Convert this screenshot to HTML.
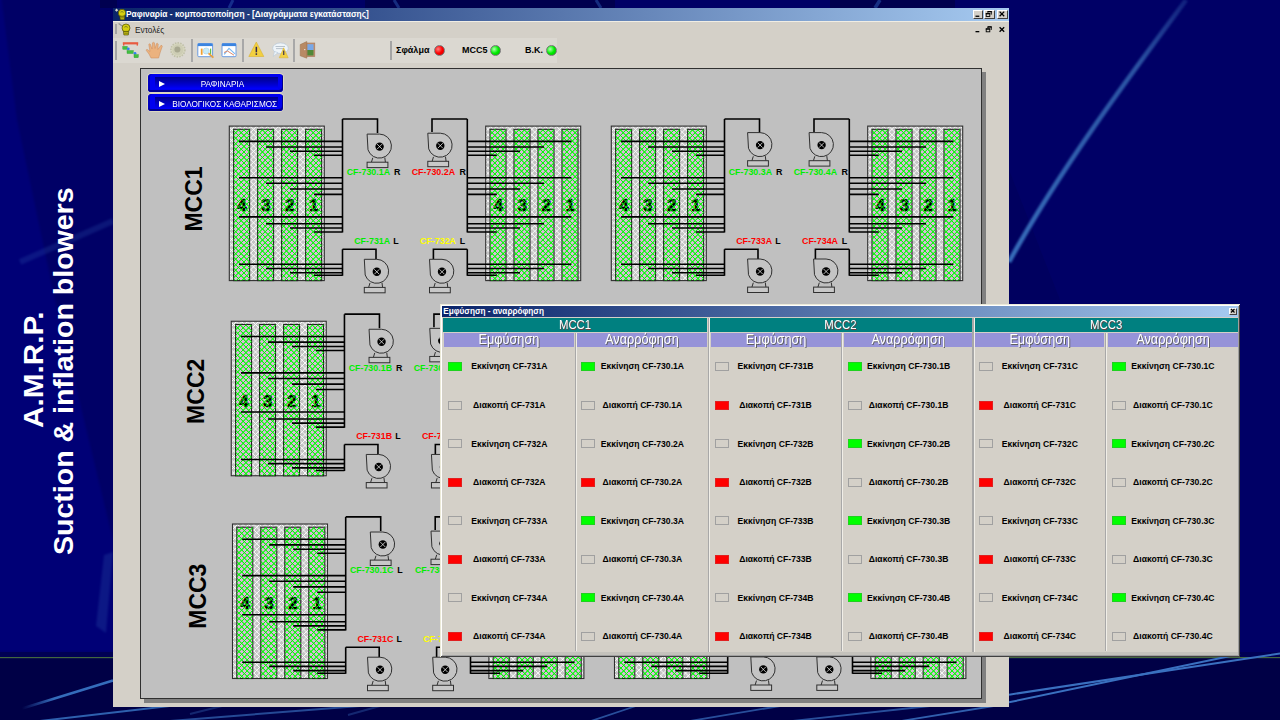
<!DOCTYPE html>
<html><head><meta charset="utf-8">
<style>
*{margin:0;padding:0;box-sizing:border-box}
html,body{width:1280px;height:720px;overflow:hidden;background:#000066;font-family:"Liberation Sans",sans-serif}
.a{position:absolute}
#bg{position:absolute;left:0;top:0}
.st{position:absolute;color:#fff;font-weight:bold;font-size:27.5px;line-height:30px;white-space:nowrap;transform-origin:0 0;transform:rotate(-90deg) scaleX(1.08)}
#win{position:absolute;left:113px;top:8px;width:896px;height:699px;background:#d4d0c8}
#title{position:absolute;left:0;top:0;width:896px;height:13px;background:linear-gradient(to right,#0a246a,#a6caf0)}
#title .t{position:absolute;left:13px;top:0px;color:#fff;font-weight:bold;font-size:8.4px;line-height:13px;white-space:nowrap}
.tb{position:absolute;top:1.5px;width:10.5px;height:9.5px;background:#d4d0c8;border-top:1px solid #fff;border-left:1px solid #fff;border-right:1px solid #404040;border-bottom:1px solid #404040}
.grip{position:absolute;width:2.4px;background:#a4a4a4}
.sep{position:absolute;width:2px;background:#a8a8a8}
.lbl{position:absolute;font-size:9px;font-weight:bold;color:#000;white-space:nowrap;line-height:10px}
.led{position:absolute;width:11px;height:11px;border-radius:50%;border:1px solid #777}
#panel{position:absolute;left:27px;top:60px;width:842px;height:631px;background:#c0c0c0;border:1px solid #303030;box-shadow:4px 4px 0 #808080}
.btn{position:absolute;left:35.4px;width:134.6px;height:17.6px;border-radius:3.5px;background:#0000f0;box-shadow:0 0 0 1px #dcd8c0, inset -1px -2px 0 #000090, inset 2px 0 0 #0000c0}
.btn .in{position:absolute;left:6.6px;top:3.2px;width:122.7px;height:11.9px;background:linear-gradient(#000088,#0000d8 70%,#0000ff)}
.btn .tri{position:absolute;left:10.6px;top:6.9px;width:0;height:0;border-left:6.5px solid #fff;border-top:3px solid transparent;border-bottom:3px solid transparent}
.btn .tx{position:absolute;left:16.6px;width:115px;top:4.4px;color:#fff;font-size:9.4px;line-height:11px;text-align:center;white-space:nowrap;transform:scaleX(0.875)}
#diag{position:absolute;left:0;top:0}
#diag .pp{fill:none;stroke:#000;stroke-width:1.6}
#diag .dg{font:bold 16.5px "Liberation Sans",sans-serif;text-anchor:middle;fill:#000;stroke:#000;stroke-width:0.7}
#diag .lb{font:bold 8.9px "Liberation Sans",sans-serif}
#diag .mcc{font:bold 23px "Liberation Sans",sans-serif;text-anchor:middle;fill:#000}
#dlg{position:absolute;left:440px;top:304px;width:800px;height:353px;background:#d4d0c8;box-shadow:inset 1px 1px 0 #ecead8,inset -1px -1px 0 #404040,inset 2px 2px 0 #fff,inset -2px -2px 0 #a0a0a0}
#dlg .dt{color:#fff;font-weight:bold;font-size:8.2px;line-height:11.2px;white-space:nowrap}
#dlg .th{color:#fff;font-size:13.2px;line-height:14.5px;text-align:center;text-shadow:1px 1px 0 #6a4040;transform:scaleX(0.86)}
#dlg .sh{color:#fff;font-size:13.8px;line-height:14.6px;text-align:center;text-shadow:1px 1px 0 #606060;transform:scaleX(0.92)}
#dlg .rt{color:#000;font-weight:bold;font-size:8.6px;line-height:11px;text-align:center;white-space:nowrap}
</style></head><body>
<svg id="bg" width="1280" height="720">
 <defs>
  <linearGradient id="lg1" x1="0" y1="0" x2="1" y2="0"><stop offset="0" stop-color="#00007e"/><stop offset="1" stop-color="#000066"/></linearGradient>
  <linearGradient id="fadeL" x1="0" y1="0" x2="1" y2="0"><stop offset="0" stop-color="#3a78c8" stop-opacity="0"/><stop offset="0.35" stop-color="#3a78c8" stop-opacity="0.9"/><stop offset="1" stop-color="#3a78c8" stop-opacity="0.9"/></linearGradient>
 </defs>
 <filter id="bl3"><feGaussianBlur stdDeviation="6"/></filter><filter id="bl1"><feGaussianBlur stdDeviation="1.2"/></filter>
 <path d="M-5 -5H1L17 120L55 300L113 540V652H-5Z" fill="#000076" filter="url(#bl1)"/>
 <path d="M1009 170L1060 300L1009 300Z" fill="#00005a" opacity="0.6"/>
 <linearGradient id="sg" x1="0" y1="0" x2="0" y2="262" gradientUnits="userSpaceOnUse"><stop offset="0" stop-color="#3a70b8" stop-opacity="0.3"/><stop offset="0.25" stop-color="#3a70b8" stop-opacity="0.75"/><stop offset="1" stop-color="#3a74c0" stop-opacity="0.95"/></linearGradient>
 <path d="M1186 0C1140 62 1062 165 1009 262" fill="none" stroke="url(#sg)" stroke-width="4.6" filter="url(#bl1)"/>
 <path d="M20 262L113 221" fill="none" stroke="#2a50a8" stroke-width="6" opacity="0.28" filter="url(#bl1)"/>
 <path d="M104 555L113 552L106 633L96 626Z" fill="#2a50a8" opacity="0.3" filter="url(#bl1)"/>
 <rect x="365" y="0" width="250" height="8" fill="#00004e"/>
 <rect x="830" y="0" width="125" height="8" fill="#00004e"/>
 <rect x="100" y="0" width="17" height="8" fill="#000050"/>
 <path d="M233 0L229 8" stroke="#2a58b0" stroke-width="3" opacity="0.5"/>
 <path d="M394 0L399 8" stroke="#2a58b0" stroke-width="3" opacity="0.5"/>
 <path d="M596 0L601 8" stroke="#2a58b0" stroke-width="3" opacity="0.5"/>
 <path d="M880 0L875 8" stroke="#2a58b0" stroke-width="3.5" opacity="0.55"/>
 <rect x="0" y="652" width="1280" height="6" fill="#000054"/>
 <rect x="0" y="657" width="1280" height="1.6" fill="#4f7a3c" opacity="0.85"/>
 <rect x="0" y="658.3" width="1280" height="62" fill="#000046"/>
 <path d="M22 708.5L113 680.5" stroke="url(#fadeL)" stroke-width="2.6"/>
 <path d="M40 721L230 699" stroke="#3a78c8" stroke-width="2" opacity="0.8"/>
 <path d="M1009 694.7L1280 653.5" stroke="#3a70c0" stroke-width="2"/>
 <path d="M1009 702.3L1240 654" stroke="#3a70c0" stroke-width="2"/>
 <path d="M895 722L1009 703.5" stroke="#3a70c0" stroke-width="1.8" opacity="0.85"/>
 <path d="M190 714L222 706" stroke="#3a70c0" stroke-width="2" opacity="0.35"/>
 <path d="M170 721L360 706" stroke="#3a70c0" stroke-width="2" opacity="0.65"/>
 <path d="M348 715L380 706" stroke="#3a70c0" stroke-width="2" opacity="0.35"/>
 <path d="M588 722L636 706" stroke="#3a70c0" stroke-width="1.8" opacity="0.7"/>
 <path d="M690 721L780 706" stroke="#3a70c0" stroke-width="1.8" opacity="0.7"/>
 <path d="M792 721L930 706" stroke="#3a70c0" stroke-width="1.8" opacity="0.7"/>
</svg>
<div class="st" style="left:19px;top:428px">A.M.R.P.</div>
<div class="st" style="left:49px;top:555px;transform:rotate(-90deg) scaleX(1.037)">Suction &amp; inflation blowers</div>
<div id="win">
 <div id="title">
  <svg class="a" style="left:0px;top:0px" width="14" height="13" viewBox="113 8 14 13"><path d="M116.6 8.6L118.2 10.2L116.6 11.8L115 10.2Z" fill="#d8d8d0"/><circle cx="122" cy="13" r="3.7" fill="#d6d010" stroke="#505000" stroke-width="0.7"/><path d="M120.5 12.2Q122 10.8 123.6 12.4" stroke="#707020" stroke-width="0.8" fill="none"/><path d="M119.8 16.2H124.8L124.4 19.8H120.3Z" fill="#c8c010" stroke="#404000" stroke-width="0.6"/><path d="M120.6 17.8H124" stroke="#505010" stroke-width="0.6"/></svg>
  <span class="t">Ραφιναρία - κομποστοποίηση - [Διαγράμματα εγκατάστασης]</span>
  <div class="tb" style="left:859.5px"></div>
  <div class="tb" style="left:871px"></div>
  <div class="tb" style="left:884px"></div>
 </div>
 <div class="a" style="left:0;top:13px;width:896px;height:1px;background:#f0ede4"></div>
 <div class="grip" style="left:2px;top:16px;height:10px"></div>
 <svg class="a" style="left:4px;top:14px" width="16" height="15" viewBox="117 22 16 15"><path d="M118.6 23.6L122.5 26.2" stroke="#909090" stroke-width="1.2"/><circle cx="126" cy="28" r="4" fill="#d6d010" stroke="#505000" stroke-width="0.7"/><path d="M124.3 27.2Q126 25.6 127.8 27.4" stroke="#707020" stroke-width="0.8" fill="none"/><path d="M123.4 31.4H128.8L128.3 35H123.9Z" fill="#c8c010" stroke="#404000" stroke-width="0.6"/><path d="M124.3 33.2H128" stroke="#505010" stroke-width="0.6"/></svg>
 <div class="a" style="left:22px;top:17px;font-size:8.3px;color:#222;line-height:10px">Εντολές</div>
 <svg class="a" style="left:850px;top:0" width="46" height="30" viewBox="963 8 46 30">
  <rect x="975.5" y="15.6" width="3.8" height="1.3" fill="#000"/>
  <g id="rst"><path d="M987.9 11.6H991.3V14.6M987.9 11.6V12.8" fill="none" stroke="#000" stroke-width="0.9"/><rect x="987.5" y="11" width="4.3" height="1.2" fill="#000"/>
  <rect x="986.2" y="13.6" width="3.6" height="2.9" fill="#d4d0c8" stroke="#000" stroke-width="0.9"/><rect x="985.8" y="13.1" width="4.4" height="1.2" fill="#000"/></g>
  <path d="M999.6 11.6L1004.2 16.2M1004.2 11.6L999.6 16.2" stroke="#000" stroke-width="1.3"/>
  <rect x="975.5" y="31" width="3.8" height="1.3" fill="#000"/>
  <use href="#rst" y="15.3"/>
  <path d="M999.6 27.2L1004.2 31.8M1004.2 27.2L999.6 31.8" stroke="#000" stroke-width="1.3"/>
 </svg>
 <div class="a" style="left:0;top:30px;width:275px;height:25px;background:#dbd8d1"></div>
 <div class="a" style="left:275px;top:30px;width:169px;height:25px;background:#dbd8d1"></div>
 <div class="grip" style="left:2px;top:33px;height:19px"></div>

 <svg class="a" style="left:0;top:30px" width="210" height="25" viewBox="113 38 210 25">
  <!-- gantt -->
  <rect x="122.8" y="42.2" width="15.4" height="2.2" fill="#e85a40"/>
  <rect x="123" y="44" width="1.4" height="1.6" fill="#e85a40"/><rect x="136.6" y="44" width="1.4" height="1.6" fill="#e85a40"/>
  <rect x="122.8" y="46.4" width="4.4" height="2.9" fill="#40c040" stroke="#2a9a2a" stroke-width="0.4"/>
  <circle cx="128.3" cy="48.9" r="1.4" fill="#3080f0"/>
  <rect x="127" y="50.6" width="6.2" height="2.9" fill="#40c040" stroke="#2a9a2a" stroke-width="0.4"/>
  <circle cx="135" cy="53.3" r="1.4" fill="#3080f0"/>
  <rect x="134" y="54.6" width="4.3" height="3.1" fill="#40c040" stroke="#2a9a2a" stroke-width="0.4"/>
  <!-- hand -->
  <path d="M151 58 L149 54 L146.3 50.5 Q146 49.2 147.4 49.5 L150 51.5 L148.8 44.6 Q149 43.3 150.2 44 L152 49 L152.5 42.8 Q153.6 41.8 154.4 42.8 L155 48.5 L156.5 43.6 Q157.6 42.8 158.2 44 L157.8 49.5 L160.8 45.5 Q162 45 162.3 46.3 L160 53 L158.6 58 Z" fill="#ebb27e" stroke="#c8885a" stroke-width="0.5"/>
  <!-- gear -->
  <circle cx="177.9" cy="49.9" r="7" fill="#d8d8c0" stroke="#c0c0a8" stroke-width="1.6" stroke-dasharray="1.5 1.2"/>
  <circle cx="177.9" cy="49.9" r="5.6" fill="#cdcdb4"/>
  <circle cx="177.4" cy="49.4" r="3" fill="#a8a890"/>
  <!-- zoom window -->
  <rect x="197.8" y="43.5" width="14.8" height="13.2" rx="1" fill="#fff" stroke="#6a9ae0" stroke-width="1"/>
  <rect x="197.8" y="43.5" width="14.8" height="2.6" fill="#3a84e0"/>
  <rect x="200.8" y="48.6" width="1.8" height="6.2" fill="#f0a030"/>
  <rect x="210" y="48.6" width="1.2" height="5.5" fill="#60c050"/>
  <circle cx="206.2" cy="51" r="3.1" fill="#c8ecf8" stroke="#a0c8e0" stroke-width="0.5"/>
  <path d="M208.5 53.3L213.4 57.6" stroke="#e8a040" stroke-width="1.8"/>
  <!-- chart window -->
  <rect x="222" y="43.5" width="14" height="13.2" rx="1" fill="#fff" stroke="#6a9ae0" stroke-width="1"/>
  <rect x="222" y="43.5" width="14" height="2.6" fill="#3a84e0"/>
  <path d="M224.2 54.3L229 48.3L235 53.8" fill="none" stroke="#7ab8f0" stroke-width="1.1"/>
  <path d="M224 52.5L227.5 51L234 55.2" fill="none" stroke="#e08868" stroke-width="1"/>
  <!-- warning -->
  <path d="M256.3 42L263.8 56.5H248.8Z" fill="#f2d040" stroke="#d8b030" stroke-width="0.6" stroke-linejoin="round"/>
  <rect x="255.6" y="46.8" width="1.5" height="5.5" fill="#302850"/><rect x="255.6" y="53.3" width="1.5" height="1.6" fill="#302850"/>
  <!-- speech + warning -->
  <ellipse cx="280.5" cy="48.2" rx="7.8" ry="5.3" fill="#eef4f8" stroke="#b0c4d8" stroke-width="0.6"/>
  <path d="M274.5 51.5L273.3 56.4L278 52.6Z" fill="#eef4f8" stroke="#b0c4d8" stroke-width="0.5"/>
  <path d="M275.5 46.5H285M276 48.6H284" stroke="#8090a0" stroke-width="0.5"/>
  <path d="M283.7 47.8L288.2 57.8H279.2Z" fill="#f2d040" stroke="#d8b030" stroke-width="0.5"/>
  <rect x="283.2" y="50.6" width="1.1" height="4.4" fill="#302850"/>
  <!-- door -->
  <rect x="306" y="43" width="8.8" height="13.6" fill="#c09070" stroke="#a87858" stroke-width="0.6"/>
  <rect x="307.3" y="44.2" width="6.2" height="5.8" fill="#78a8e8"/>
  <rect x="307.3" y="50" width="6.2" height="5.5" fill="#508838"/>
  <path d="M300.2 44.6L306.8 41.5V58.2L300.2 55.8Z" fill="#b88a64" stroke="#98704c" stroke-width="0.5"/>
  <circle cx="304.8" cy="49.6" r="0.6" fill="#fff"/>
 </svg>
 <div class="sep" style="left:78px;top:31px;height:23px"></div>
 <div class="sep" style="left:129px;top:31px;height:23px"></div>
 <div class="sep" style="left:180px;top:31px;height:23px"></div>
 <div class="grip" style="left:277px;top:33px;height:19px"></div>
 <div class="lbl" style="left:283px;top:37px">Σφάλμα</div>
 <div class="led" style="left:321px;top:37px;background:radial-gradient(circle at 35% 35%,#ff8080,#f00 50%,#c00)"></div>
 <div class="lbl" style="left:349px;top:37px">MCC5</div>
 <div class="led" style="left:377px;top:37px;background:radial-gradient(circle at 35% 35%,#b0ffb0,#0e0 50%,#0a0)"></div>
 <div class="lbl" style="left:412px;top:37px">Β.Κ.</div>
 <div class="led" style="left:433px;top:37px;background:radial-gradient(circle at 35% 35%,#b0ffb0,#0e0 50%,#0a0)"></div>
 <div id="panel"></div>
 <div class="btn" style="top:66px"><div class="in"></div><div class="tri"></div><div class="tx">ΡΑΦΙΝΑΡΙΑ</div></div>
 <div class="btn" style="top:85.8px"><div class="in"></div><div class="tri"></div><div class="tx">ΒΙΟΛΟΓΙΚΟΣ ΚΑΘΑΡΙΣΜΟΣ</div></div>
</div>
<svg id="diag" width="1280" height="720">
<defs>
 <clipPath id="cc"><rect width="16" height="151.3"/></clipPath><g id="colhl"><path clip-path="url(#cc)" d="M-177.30 0l177 177M-171.80 0l177 177M-166.30 0l177 177M-160.80 0l177 177M-155.30 0l177 177M-149.80 0l177 177M-144.30 0l177 177M-138.80 0l177 177M-133.30 0l177 177M-127.80 0l177 177M-122.30 0l177 177M-116.80 0l177 177M-111.30 0l177 177M-105.80 0l177 177M-100.30 0l177 177M-94.80 0l177 177M-89.30 0l177 177M-83.80 0l177 177M-78.30 0l177 177M-72.80 0l177 177M-67.30 0l177 177M-61.80 0l177 177M-56.30 0l177 177M-50.80 0l177 177M-45.30 0l177 177M-39.80 0l177 177M-34.30 0l177 177M-28.80 0l177 177M-23.30 0l177 177M-17.80 0l177 177M-12.30 0l177 177M-6.80 0l177 177M-1.30 0l177 177M4.20 0l177 177M9.70 0l177 177M15.20 0l177 177M20.70 0l177 177M0.00 0l-177 177M5.50 0l-177 177M11.00 0l-177 177M16.50 0l-177 177M22.00 0l-177 177M27.50 0l-177 177M33.00 0l-177 177M38.50 0l-177 177M44.00 0l-177 177M49.50 0l-177 177M55.00 0l-177 177M60.50 0l-177 177M66.00 0l-177 177M71.50 0l-177 177M77.00 0l-177 177M82.50 0l-177 177M88.00 0l-177 177M93.50 0l-177 177M99.00 0l-177 177M104.50 0l-177 177M110.00 0l-177 177M115.50 0l-177 177M121.00 0l-177 177M126.50 0l-177 177M132.00 0l-177 177M137.50 0l-177 177M143.00 0l-177 177M148.50 0l-177 177M154.00 0l-177 177M159.50 0l-177 177M165.00 0l-177 177M170.50 0l-177 177M176.00 0l-177 177M181.50 0l-177 177M187.00 0l-177 177M192.50 0l-177 177" stroke="#00ff00" stroke-width="0.95" fill="none"/></g><clipPath id="bc"><rect width="95" height="154.5"/></clipPath><g id="colh"><rect width="16" height="151.3" fill="#dcb8dc"/><use href="#colhl"/><rect width="16" height="151.3" fill="none" stroke="#202020" stroke-width="1.1"/></g><g id="blkh"><rect width="95" height="154.5" fill="#c4c4c4"/><path clip-path="url(#bc)" d="M-259.50 0l259 259M-254.00 0l259 259M-248.50 0l259 259M-243.00 0l259 259M-237.50 0l259 259M-232.00 0l259 259M-226.50 0l259 259M-221.00 0l259 259M-215.50 0l259 259M-210.00 0l259 259M-204.50 0l259 259M-199.00 0l259 259M-193.50 0l259 259M-188.00 0l259 259M-182.50 0l259 259M-177.00 0l259 259M-171.50 0l259 259M-166.00 0l259 259M-160.50 0l259 259M-155.00 0l259 259M-149.50 0l259 259M-144.00 0l259 259M-138.50 0l259 259M-133.00 0l259 259M-127.50 0l259 259M-122.00 0l259 259M-116.50 0l259 259M-111.00 0l259 259M-105.50 0l259 259M-100.00 0l259 259M-94.50 0l259 259M-89.00 0l259 259M-83.50 0l259 259M-78.00 0l259 259M-72.50 0l259 259M-67.00 0l259 259M-61.50 0l259 259M-56.00 0l259 259M-50.50 0l259 259M-45.00 0l259 259M-39.50 0l259 259M-34.00 0l259 259M-28.50 0l259 259M-23.00 0l259 259M-17.50 0l259 259M-12.00 0l259 259M-6.50 0l259 259M-1.00 0l259 259M4.50 0l259 259M10.00 0l259 259M15.50 0l259 259M21.00 0l259 259M26.50 0l259 259M32.00 0l259 259M37.50 0l259 259M43.00 0l259 259M48.50 0l259 259M54.00 0l259 259M59.50 0l259 259M65.00 0l259 259M70.50 0l259 259M76.00 0l259 259M81.50 0l259 259M87.00 0l259 259M92.50 0l259 259M98.00 0l259 259M0.00 0l-259 259M5.50 0l-259 259M11.00 0l-259 259M16.50 0l-259 259M22.00 0l-259 259M27.50 0l-259 259M33.00 0l-259 259M38.50 0l-259 259M44.00 0l-259 259M49.50 0l-259 259M55.00 0l-259 259M60.50 0l-259 259M66.00 0l-259 259M71.50 0l-259 259M77.00 0l-259 259M82.50 0l-259 259M88.00 0l-259 259M93.50 0l-259 259M99.00 0l-259 259M104.50 0l-259 259M110.00 0l-259 259M115.50 0l-259 259M121.00 0l-259 259M126.50 0l-259 259M132.00 0l-259 259M137.50 0l-259 259M143.00 0l-259 259M148.50 0l-259 259M154.00 0l-259 259M159.50 0l-259 259M165.00 0l-259 259M170.50 0l-259 259M176.00 0l-259 259M181.50 0l-259 259M187.00 0l-259 259M192.50 0l-259 259M198.00 0l-259 259M203.50 0l-259 259M209.00 0l-259 259M214.50 0l-259 259M220.00 0l-259 259M225.50 0l-259 259M231.00 0l-259 259M236.50 0l-259 259M242.00 0l-259 259M247.50 0l-259 259M253.00 0l-259 259M258.50 0l-259 259M264.00 0l-259 259M269.50 0l-259 259M275.00 0l-259 259M280.50 0l-259 259M286.00 0l-259 259M291.50 0l-259 259M297.00 0l-259 259M302.50 0l-259 259M308.00 0l-259 259M313.50 0l-259 259M319.00 0l-259 259M324.50 0l-259 259M330.00 0l-259 259M335.50 0l-259 259M341.00 0l-259 259M346.50 0l-259 259M352.00 0l-259 259" stroke="#fafafa" stroke-width="1" fill="none"/><rect width="95" height="154.5" fill="none" stroke="#303030" stroke-width="1.1"/></g>
 <g id="blw">
  <path d="M-12.5 -12.5H0A12 12 0 1 1 -11.6 3.2Z" fill="#c4c4c4" stroke="#303030" stroke-width="1"/>
  <path d="M-6.8 11.2L-8.2 15.7M5.2 11L5.8 15.7" stroke="#303030" stroke-width="1"/>
  <rect x="-12.5" y="15.6" width="20.8" height="5.4" fill="#c8c8c8" stroke="#303030" stroke-width="1"/>
  <circle r="4.2" fill="#000"/>
  <path d="M-2.5 -2.5L2.5 2.5M2.5 -2.5L-2.5 2.5" stroke="#fff" stroke-width="0.7"/>
 </g>
</defs>
<text class="mcc" transform="translate(202.4 199) rotate(-90)">MCC1</text>
<use href="#blkh" x="229.3" y="126.1"/>
<use href="#colh" x="233.6" y="129.3"/>
<use href="#colh" x="257.6" y="129.3"/>
<use href="#colh" x="281.6" y="129.3"/>
<use href="#colh" x="305.6" y="129.3"/>
<text x="241.9" y="211.4" class="dg">4</text>
<text x="265.9" y="211.4" class="dg">3</text>
<text x="289.9" y="211.4" class="dg">2</text>
<text x="313.9" y="211.4" class="dg">1</text>
<use href="#colhl" x="233.6" y="129.3"/>
<use href="#colhl" x="257.6" y="129.3"/>
<use href="#colhl" x="281.6" y="129.3"/>
<use href="#colhl" x="305.6" y="129.3"/>
<use href="#blkh" x="485.7" y="126.1"/>
<use href="#colh" x="490" y="129.3"/>
<use href="#colh" x="514" y="129.3"/>
<use href="#colh" x="538" y="129.3"/>
<use href="#colh" x="562" y="129.3"/>
<text x="498.3" y="211.4" class="dg">4</text>
<text x="522.3" y="211.4" class="dg">3</text>
<text x="546.3" y="211.4" class="dg">2</text>
<text x="570.3" y="211.4" class="dg">1</text>
<use href="#colhl" x="490" y="129.3"/>
<use href="#colhl" x="514" y="129.3"/>
<use href="#colhl" x="538" y="129.3"/>
<use href="#colhl" x="562" y="129.3"/>
<path d="M239 141.4H342.5 M467.3 141.4H571.4 M266 147H342.5 M467.3 147H544 M290 151.3H342.5 M467.3 151.3H520 M314 155.3H342.5 M467.3 155.3H496.8 M239 177.7H342.5 M467.3 177.7H571.4 M266 183.3H342.5 M467.3 183.3H544 M290 189H342.5 M467.3 189H520 M314 194.4H342.5 M467.3 194.4H496.8 M239 216.9H342.5 M467.3 216.9H571.4 M266 223.8H342.5 M467.3 223.8H544 M290 228H342.5 M467.3 228H520 M314 232H342.5 M467.3 232H496.8 M239 264.3H342.5 M467.3 264.3H571.4 M266 268.5H342.5 M467.3 268.5H544 M290 272.7H342.5 M467.3 272.7H520 M314 275.3H342.5 M467.3 275.3H496.8 M342.5 119V232.5 M467.3 119V232.5 M342.5 249.3V275.8 M467.3 249.3V275.8 M342.5 119H377.5V133 M467.3 119H432V132 M342.5 249.3H376V259 M467.3 249.3H433.4V259" transform="translate(0 0)" class="pp"/>
<use href="#blw" x="379.6" y="146.6"/>
<use href="#blw" x="440.3" y="145.7"/>
<use href="#blw" x="376.8" y="271.8"/>
<use href="#blw" x="442" y="271.8"/>
<text x="346.7" y="175.4" class="lb" fill="#00ee00">CF-730.1A</text>
<text x="394" y="175.4" class="lb" fill="#000">R</text>
<text x="411.7" y="175.4" class="lb" fill="#ff0000">CF-730.2A</text>
<text x="459.4" y="175.4" class="lb" fill="#000">R</text>
<text x="354.2" y="243.8" class="lb" fill="#00ee00">CF-731A</text>
<text x="393.3" y="243.8" class="lb" fill="#000">L</text>
<text x="420" y="243.8" class="lb" fill="#ffff00">CF-732A</text>
<text x="459.8" y="243.8" class="lb" fill="#000">L</text>
<use href="#blkh" x="611.3" y="126.1"/>
<use href="#colh" x="615.6" y="129.3"/>
<use href="#colh" x="639.6" y="129.3"/>
<use href="#colh" x="663.6" y="129.3"/>
<use href="#colh" x="687.6" y="129.3"/>
<text x="623.9" y="211.4" class="dg">4</text>
<text x="647.9" y="211.4" class="dg">3</text>
<text x="671.9" y="211.4" class="dg">2</text>
<text x="695.9" y="211.4" class="dg">1</text>
<use href="#colhl" x="615.6" y="129.3"/>
<use href="#colhl" x="639.6" y="129.3"/>
<use href="#colhl" x="663.6" y="129.3"/>
<use href="#colhl" x="687.6" y="129.3"/>
<use href="#blkh" x="867.7" y="126.1"/>
<use href="#colh" x="872" y="129.3"/>
<use href="#colh" x="896" y="129.3"/>
<use href="#colh" x="920" y="129.3"/>
<use href="#colh" x="944" y="129.3"/>
<text x="880.3" y="211.4" class="dg">4</text>
<text x="904.3" y="211.4" class="dg">3</text>
<text x="928.3" y="211.4" class="dg">2</text>
<text x="952.3" y="211.4" class="dg">1</text>
<use href="#colhl" x="872" y="129.3"/>
<use href="#colhl" x="896" y="129.3"/>
<use href="#colhl" x="920" y="129.3"/>
<use href="#colhl" x="944" y="129.3"/>
<path d="M621 141.4H724.5 M849.3 141.4H953.4 M648 147H724.5 M849.3 147H926 M672 151.3H724.5 M849.3 151.3H902 M696 155.3H724.5 M849.3 155.3H878.8 M621 177.7H724.5 M849.3 177.7H953.4 M648 183.3H724.5 M849.3 183.3H926 M672 189H724.5 M849.3 189H902 M696 194.4H724.5 M849.3 194.4H878.8 M621 216.9H724.5 M849.3 216.9H953.4 M648 223.8H724.5 M849.3 223.8H926 M672 228H724.5 M849.3 228H902 M696 232H724.5 M849.3 232H878.8 M621 264.3H724.5 M849.3 264.3H953.4 M648 268.5H724.5 M849.3 268.5H926 M672 272.7H724.5 M849.3 272.7H902 M696 275.3H724.5 M849.3 275.3H878.8 M724.5 119V232.5 M849.3 119V232.5 M724.5 249.3V275.8 M849.3 249.3V275.8 M724.5 119H759.5V133 M849.3 119H814V132 M724.5 249.3H758V259 M849.3 249.3H815.4V259" transform="translate(0 0)" class="pp"/>
<use href="#blw" x="760.1" y="145.1"/>
<use href="#blw" x="821.6" y="145.1"/>
<use href="#blw" x="760.1" y="271.5"/>
<use href="#blw" x="826.1" y="271.5"/>
<text x="728.7" y="175.4" class="lb" fill="#00ee00">CF-730.3A</text>
<text x="776" y="175.4" class="lb" fill="#000">R</text>
<text x="793.7" y="175.4" class="lb" fill="#00ee00">CF-730.4A</text>
<text x="841.4" y="175.4" class="lb" fill="#000">R</text>
<text x="736.2" y="243.8" class="lb" fill="#ff0000">CF-733A</text>
<text x="775.3" y="243.8" class="lb" fill="#000">L</text>
<text x="802" y="243.8" class="lb" fill="#ff0000">CF-734A</text>
<text x="841.8" y="243.8" class="lb" fill="#000">L</text>
<text class="mcc" transform="translate(204.35 391.3) rotate(-90)">MCC2</text>
<use href="#blkh" x="231.25" y="321.25"/>
<use href="#colh" x="235.55" y="324.45"/>
<use href="#colh" x="259.55" y="324.45"/>
<use href="#colh" x="283.55" y="324.45"/>
<use href="#colh" x="307.55" y="324.45"/>
<text x="243.85" y="406.55" class="dg">4</text>
<text x="267.85" y="406.55" class="dg">3</text>
<text x="291.85" y="406.55" class="dg">2</text>
<text x="315.85" y="406.55" class="dg">1</text>
<use href="#colhl" x="235.55" y="324.45"/>
<use href="#colhl" x="259.55" y="324.45"/>
<use href="#colhl" x="283.55" y="324.45"/>
<use href="#colhl" x="307.55" y="324.45"/>
<use href="#blkh" x="487.65" y="321.25"/>
<use href="#colh" x="491.95" y="324.45"/>
<use href="#colh" x="515.95" y="324.45"/>
<use href="#colh" x="539.95" y="324.45"/>
<use href="#colh" x="563.95" y="324.45"/>
<text x="500.25" y="406.55" class="dg">4</text>
<text x="524.25" y="406.55" class="dg">3</text>
<text x="548.25" y="406.55" class="dg">2</text>
<text x="572.25" y="406.55" class="dg">1</text>
<use href="#colhl" x="491.95" y="324.45"/>
<use href="#colhl" x="515.95" y="324.45"/>
<use href="#colhl" x="539.95" y="324.45"/>
<use href="#colhl" x="563.95" y="324.45"/>
<path d="M240.95 141.4H344.45 M469.25 141.4H573.35 M267.95 147H344.45 M469.25 147H545.95 M291.95 151.3H344.45 M469.25 151.3H521.95 M315.95 155.3H344.45 M469.25 155.3H498.75 M240.95 177.7H344.45 M469.25 177.7H573.35 M267.95 183.3H344.45 M469.25 183.3H545.95 M291.95 189H344.45 M469.25 189H521.95 M315.95 194.4H344.45 M469.25 194.4H498.75 M240.95 216.9H344.45 M469.25 216.9H573.35 M267.95 223.8H344.45 M469.25 223.8H545.95 M291.95 228H344.45 M469.25 228H521.95 M315.95 232H344.45 M469.25 232H498.75 M240.95 264.3H344.45 M469.25 264.3H573.35 M267.95 268.5H344.45 M469.25 268.5H545.95 M291.95 272.7H344.45 M469.25 272.7H521.95 M315.95 275.3H344.45 M469.25 275.3H498.75 M344.45 119V232.5 M469.25 119V232.5 M344.45 249.3V275.8 M469.25 249.3V275.8 M344.45 119H379.45V133 M469.25 119H433.95V132 M344.45 249.3H377.95V259 M469.25 249.3H435.35V259" transform="translate(0 195.15)" class="pp"/>
<use href="#blw" x="381.55" y="341.75"/>
<use href="#blw" x="442.25" y="340.85"/>
<use href="#blw" x="378.75" y="466.95"/>
<use href="#blw" x="443.95" y="466.95"/>
<text x="348.65" y="370.55" class="lb" fill="#00ee00">CF-730.1B</text>
<text x="395.95" y="370.55" class="lb" fill="#000">R</text>
<text x="413.65" y="370.55" class="lb" fill="#00ee00">CF-730.2B</text>
<text x="461.35" y="370.55" class="lb" fill="#000">R</text>
<text x="356.15" y="438.95" class="lb" fill="#ff0000">CF-731B</text>
<text x="395.25" y="438.95" class="lb" fill="#000">L</text>
<text x="421.95" y="438.95" class="lb" fill="#ff0000">CF-732B</text>
<text x="461.75" y="438.95" class="lb" fill="#000">L</text>
<use href="#blkh" x="613.25" y="321.25"/>
<use href="#colh" x="617.55" y="324.45"/>
<use href="#colh" x="641.55" y="324.45"/>
<use href="#colh" x="665.55" y="324.45"/>
<use href="#colh" x="689.55" y="324.45"/>
<text x="625.85" y="406.55" class="dg">4</text>
<text x="649.85" y="406.55" class="dg">3</text>
<text x="673.85" y="406.55" class="dg">2</text>
<text x="697.85" y="406.55" class="dg">1</text>
<use href="#colhl" x="617.55" y="324.45"/>
<use href="#colhl" x="641.55" y="324.45"/>
<use href="#colhl" x="665.55" y="324.45"/>
<use href="#colhl" x="689.55" y="324.45"/>
<use href="#blkh" x="869.65" y="321.25"/>
<use href="#colh" x="873.95" y="324.45"/>
<use href="#colh" x="897.95" y="324.45"/>
<use href="#colh" x="921.95" y="324.45"/>
<use href="#colh" x="945.95" y="324.45"/>
<text x="882.25" y="406.55" class="dg">4</text>
<text x="906.25" y="406.55" class="dg">3</text>
<text x="930.25" y="406.55" class="dg">2</text>
<text x="954.25" y="406.55" class="dg">1</text>
<use href="#colhl" x="873.95" y="324.45"/>
<use href="#colhl" x="897.95" y="324.45"/>
<use href="#colhl" x="921.95" y="324.45"/>
<use href="#colhl" x="945.95" y="324.45"/>
<path d="M622.95 141.4H726.45 M851.25 141.4H955.35 M649.95 147H726.45 M851.25 147H927.95 M673.95 151.3H726.45 M851.25 151.3H903.95 M697.95 155.3H726.45 M851.25 155.3H880.75 M622.95 177.7H726.45 M851.25 177.7H955.35 M649.95 183.3H726.45 M851.25 183.3H927.95 M673.95 189H726.45 M851.25 189H903.95 M697.95 194.4H726.45 M851.25 194.4H880.75 M622.95 216.9H726.45 M851.25 216.9H955.35 M649.95 223.8H726.45 M851.25 223.8H927.95 M673.95 228H726.45 M851.25 228H903.95 M697.95 232H726.45 M851.25 232H880.75 M622.95 264.3H726.45 M851.25 264.3H955.35 M649.95 268.5H726.45 M851.25 268.5H927.95 M673.95 272.7H726.45 M851.25 272.7H903.95 M697.95 275.3H726.45 M851.25 275.3H880.75 M726.45 119V232.5 M851.25 119V232.5 M726.45 249.3V275.8 M851.25 249.3V275.8 M726.45 119H761.45V133 M851.25 119H815.95V132 M726.45 249.3H759.95V259 M851.25 249.3H817.35V259" transform="translate(0 195.15)" class="pp"/>
<use href="#blw" x="762.05" y="340.25"/>
<use href="#blw" x="823.55" y="340.25"/>
<use href="#blw" x="762.05" y="466.65"/>
<use href="#blw" x="828.05" y="466.65"/>
<text x="730.65" y="370.55" class="lb" fill="#00ee00">CF-730.3B</text>
<text x="777.95" y="370.55" class="lb" fill="#000">R</text>
<text x="795.65" y="370.55" class="lb" fill="#00ee00">CF-730.4B</text>
<text x="843.35" y="370.55" class="lb" fill="#000">R</text>
<text x="738.15" y="438.95" class="lb" fill="#ff0000">CF-733B</text>
<text x="777.25" y="438.95" class="lb" fill="#000">L</text>
<text x="803.95" y="438.95" class="lb" fill="#ff0000">CF-734B</text>
<text x="843.75" y="438.95" class="lb" fill="#000">L</text>
<text class="mcc" transform="translate(205.6 596.2) rotate(-90)">MCC3</text>
<use href="#blkh" x="232.5" y="524"/>
<use href="#colh" x="236.8" y="527.2"/>
<use href="#colh" x="260.8" y="527.2"/>
<use href="#colh" x="284.8" y="527.2"/>
<use href="#colh" x="308.8" y="527.2"/>
<text x="245.1" y="609.3" class="dg">4</text>
<text x="269.1" y="609.3" class="dg">3</text>
<text x="293.1" y="609.3" class="dg">2</text>
<text x="317.1" y="609.3" class="dg">1</text>
<use href="#colhl" x="236.8" y="527.2"/>
<use href="#colhl" x="260.8" y="527.2"/>
<use href="#colhl" x="284.8" y="527.2"/>
<use href="#colhl" x="308.8" y="527.2"/>
<use href="#blkh" x="488.9" y="524"/>
<use href="#colh" x="493.2" y="527.2"/>
<use href="#colh" x="517.2" y="527.2"/>
<use href="#colh" x="541.2" y="527.2"/>
<use href="#colh" x="565.2" y="527.2"/>
<text x="501.5" y="609.3" class="dg">4</text>
<text x="525.5" y="609.3" class="dg">3</text>
<text x="549.5" y="609.3" class="dg">2</text>
<text x="573.5" y="609.3" class="dg">1</text>
<use href="#colhl" x="493.2" y="527.2"/>
<use href="#colhl" x="517.2" y="527.2"/>
<use href="#colhl" x="541.2" y="527.2"/>
<use href="#colhl" x="565.2" y="527.2"/>
<path d="M242.2 141.4H345.7 M470.5 141.4H574.6 M269.2 147H345.7 M470.5 147H547.2 M293.2 151.3H345.7 M470.5 151.3H523.2 M317.2 155.3H345.7 M470.5 155.3H500 M242.2 177.7H345.7 M470.5 177.7H574.6 M269.2 183.3H345.7 M470.5 183.3H547.2 M293.2 189H345.7 M470.5 189H523.2 M317.2 194.4H345.7 M470.5 194.4H500 M242.2 216.9H345.7 M470.5 216.9H574.6 M269.2 223.8H345.7 M470.5 223.8H547.2 M293.2 228H345.7 M470.5 228H523.2 M317.2 232H345.7 M470.5 232H500 M242.2 264.3H345.7 M470.5 264.3H574.6 M269.2 268.5H345.7 M470.5 268.5H547.2 M293.2 272.7H345.7 M470.5 272.7H523.2 M317.2 275.3H345.7 M470.5 275.3H500 M345.7 119V232.5 M470.5 119V232.5 M345.7 249.3V275.8 M470.5 249.3V275.8 M345.7 119H380.7V133 M470.5 119H435.2V132 M345.7 249.3H379.2V259 M470.5 249.3H436.6V259" transform="translate(0 397.9)" class="pp"/>
<use href="#blw" x="382.8" y="544.5"/>
<use href="#blw" x="443.5" y="543.6"/>
<use href="#blw" x="380" y="669.7"/>
<use href="#blw" x="445.2" y="669.7"/>
<text x="349.9" y="573.3" class="lb" fill="#00ee00">CF-730.1C</text>
<text x="397.2" y="573.3" class="lb" fill="#000">L</text>
<text x="414.9" y="573.3" class="lb" fill="#00ee00">CF-730.2C</text>
<text x="462.6" y="573.3" class="lb" fill="#000">L</text>
<text x="357.4" y="641.7" class="lb" fill="#ff0000">CF-731C</text>
<text x="396.5" y="641.7" class="lb" fill="#000">L</text>
<text x="423.2" y="641.7" class="lb" fill="#ffff00">CF-732C</text>
<text x="463" y="641.7" class="lb" fill="#000">L</text>
<use href="#blkh" x="614.5" y="524"/>
<use href="#colh" x="618.8" y="527.2"/>
<use href="#colh" x="642.8" y="527.2"/>
<use href="#colh" x="666.8" y="527.2"/>
<use href="#colh" x="690.8" y="527.2"/>
<text x="627.1" y="609.3" class="dg">4</text>
<text x="651.1" y="609.3" class="dg">3</text>
<text x="675.1" y="609.3" class="dg">2</text>
<text x="699.1" y="609.3" class="dg">1</text>
<use href="#colhl" x="618.8" y="527.2"/>
<use href="#colhl" x="642.8" y="527.2"/>
<use href="#colhl" x="666.8" y="527.2"/>
<use href="#colhl" x="690.8" y="527.2"/>
<use href="#blkh" x="870.9" y="524"/>
<use href="#colh" x="875.2" y="527.2"/>
<use href="#colh" x="899.2" y="527.2"/>
<use href="#colh" x="923.2" y="527.2"/>
<use href="#colh" x="947.2" y="527.2"/>
<text x="883.5" y="609.3" class="dg">4</text>
<text x="907.5" y="609.3" class="dg">3</text>
<text x="931.5" y="609.3" class="dg">2</text>
<text x="955.5" y="609.3" class="dg">1</text>
<use href="#colhl" x="875.2" y="527.2"/>
<use href="#colhl" x="899.2" y="527.2"/>
<use href="#colhl" x="923.2" y="527.2"/>
<use href="#colhl" x="947.2" y="527.2"/>
<path d="M624.2 141.4H727.7 M852.5 141.4H956.6 M651.2 147H727.7 M852.5 147H929.2 M675.2 151.3H727.7 M852.5 151.3H905.2 M699.2 155.3H727.7 M852.5 155.3H882 M624.2 177.7H727.7 M852.5 177.7H956.6 M651.2 183.3H727.7 M852.5 183.3H929.2 M675.2 189H727.7 M852.5 189H905.2 M699.2 194.4H727.7 M852.5 194.4H882 M624.2 216.9H727.7 M852.5 216.9H956.6 M651.2 223.8H727.7 M852.5 223.8H929.2 M675.2 228H727.7 M852.5 228H905.2 M699.2 232H727.7 M852.5 232H882 M624.2 264.3H727.7 M852.5 264.3H956.6 M651.2 268.5H727.7 M852.5 268.5H929.2 M675.2 272.7H727.7 M852.5 272.7H905.2 M699.2 275.3H727.7 M852.5 275.3H882 M727.7 119V232.5 M852.5 119V232.5 M727.7 249.3V275.8 M852.5 249.3V275.8 M727.7 119H762.7V133 M852.5 119H817.2V132 M727.7 249.3H761.2V259 M852.5 249.3H818.6V259" transform="translate(0 397.9)" class="pp"/>
<use href="#blw" x="763.3" y="543"/>
<use href="#blw" x="824.8" y="543"/>
<use href="#blw" x="763.3" y="669.4"/>
<use href="#blw" x="829.3" y="669.4"/>
<text x="731.9" y="573.3" class="lb" fill="#00ee00">CF-730.3C</text>
<text x="779.2" y="573.3" class="lb" fill="#000">L</text>
<text x="796.9" y="573.3" class="lb" fill="#00ee00">CF-730.4C</text>
<text x="844.6" y="573.3" class="lb" fill="#000">L</text>
<text x="739.4" y="641.7" class="lb" fill="#ff0000">CF-733C</text>
<text x="778.5" y="641.7" class="lb" fill="#000">L</text>
<text x="805.2" y="641.7" class="lb" fill="#ff0000">CF-734C</text>
<text x="845" y="641.7" class="lb" fill="#000">L</text></svg>
<div id="dlg">
<div class="a" style="left:2.2px;top:2px;width:796.3px;height:10.5px;background:linear-gradient(to right,#0a246a,#a6caf0)"></div>
<div class="a dt" style="left:3.2px;top:2px">Εμφύσηση - αναρρόφηση</div>
<div class="a" style="left:789.4px;top:3.7px;width:7.5px;height:7.2px;background:#d4d0c8;border-top:1px solid #fff;border-left:1px solid #fff;border-right:1px solid #404040;border-bottom:1px solid #404040"></div>
<svg class="a" style="left:789.4px;top:3.4px" width="8" height="8"><path d="M2 2L5.5 5.5M5.5 2L2 5.5" stroke="#000" stroke-width="1.1"/></svg>
<div class="a" style="left:3.2px;top:14px;width:264px;height:13.9px;background:#008080"></div>
<div class="a th" style="left:3.2px;top:14px;width:264px">MCC1</div>
<div class="a" style="left:269.1px;top:14px;width:262.9px;height:13.9px;background:#008080"></div>
<div class="a th" style="left:269.1px;top:14px;width:262.9px">MCC2</div>
<div class="a" style="left:533.75px;top:14px;width:264.25px;height:13.9px;background:#008080"></div>
<div class="a th" style="left:533.75px;top:14px;width:264.25px">MCC3</div>
<div class="a" style="left:4.3px;top:29.4px;width:129.9px;height:13.6px;background:#9693d8"></div>
<div class="a sh" style="left:4.3px;top:29.4px;width:129.9px">Εμφύσηση</div>
<div class="a" style="left:134.5px;top:29.4px;width:1.5px;height:318.1px;background:#a8a8a8"></div>
<div class="a" style="left:136px;top:29.4px;width:1.2px;height:318.1px;background:#f0eee8"></div>
<div class="a" style="left:8.3px;top:58px;width:14px;height:9px;background:#00ff00;border:1px solid #20d020"></div>
<div class="a rt" style="left:19.3px;top:57.4px;width:100px">Εκκίνηση CF-731A</div>
<div class="a" style="left:8.3px;top:96.7px;width:14px;height:9px;background:#d4d0c8;border:1px solid #a0a0a0"></div>
<div class="a rt" style="left:19.3px;top:96.1px;width:100px">Διακοπή CF-731A</div>
<div class="a" style="left:8.3px;top:135.1px;width:14px;height:9px;background:#d4d0c8;border:1px solid #a0a0a0"></div>
<div class="a rt" style="left:19.3px;top:134.5px;width:100px">Εκκίνηση CF-732A</div>
<div class="a" style="left:8.3px;top:173.8px;width:14px;height:9px;background:#ff0000;border:1px solid #e02020"></div>
<div class="a rt" style="left:19.3px;top:173.2px;width:100px">Διακοπή CF-732A</div>
<div class="a" style="left:8.3px;top:212.1px;width:14px;height:9px;background:#d4d0c8;border:1px solid #a0a0a0"></div>
<div class="a rt" style="left:19.3px;top:211.5px;width:100px">Εκκίνηση CF-733A</div>
<div class="a" style="left:8.3px;top:250.5px;width:14px;height:9px;background:#ff0000;border:1px solid #e02020"></div>
<div class="a rt" style="left:19.3px;top:249.9px;width:100px">Διακοπή CF-733A</div>
<div class="a" style="left:8.3px;top:289.2px;width:14px;height:9px;background:#d4d0c8;border:1px solid #a0a0a0"></div>
<div class="a rt" style="left:19.3px;top:288.6px;width:100px">Εκκίνηση CF-734A</div>
<div class="a" style="left:8.3px;top:327.6px;width:14px;height:9px;background:#ff0000;border:1px solid #e02020"></div>
<div class="a rt" style="left:19.3px;top:327px;width:100px">Διακοπή CF-734A</div>
<div class="a" style="left:137.4px;top:29.4px;width:129.8px;height:13.6px;background:#9693d8"></div>
<div class="a sh" style="left:137.4px;top:29.4px;width:129.8px">Αναρρόφηση</div>
<div class="a" style="left:267.5px;top:14px;width:1.5px;height:333.5px;background:#a8a8a8"></div>
<div class="a" style="left:269px;top:14px;width:1.2px;height:333.5px;background:#f0eee8"></div>
<div class="a" style="left:141.4px;top:58px;width:14px;height:9px;background:#00ff00;border:1px solid #20d020"></div>
<div class="a rt" style="left:152.4px;top:57.4px;width:100px">Εκκίνηση CF-730.1A</div>
<div class="a" style="left:141.4px;top:96.7px;width:14px;height:9px;background:#d4d0c8;border:1px solid #a0a0a0"></div>
<div class="a rt" style="left:152.4px;top:96.1px;width:100px">Διακοπή CF-730.1A</div>
<div class="a" style="left:141.4px;top:135.1px;width:14px;height:9px;background:#d4d0c8;border:1px solid #a0a0a0"></div>
<div class="a rt" style="left:152.4px;top:134.5px;width:100px">Εκκίνηση CF-730.2A</div>
<div class="a" style="left:141.4px;top:173.8px;width:14px;height:9px;background:#ff0000;border:1px solid #e02020"></div>
<div class="a rt" style="left:152.4px;top:173.2px;width:100px">Διακοπή CF-730.2A</div>
<div class="a" style="left:141.4px;top:212.1px;width:14px;height:9px;background:#00ff00;border:1px solid #20d020"></div>
<div class="a rt" style="left:152.4px;top:211.5px;width:100px">Εκκίνηση CF-730.3A</div>
<div class="a" style="left:141.4px;top:250.5px;width:14px;height:9px;background:#d4d0c8;border:1px solid #a0a0a0"></div>
<div class="a rt" style="left:152.4px;top:249.9px;width:100px">Διακοπή CF-730.3A</div>
<div class="a" style="left:141.4px;top:289.2px;width:14px;height:9px;background:#00ff00;border:1px solid #20d020"></div>
<div class="a rt" style="left:152.4px;top:288.6px;width:100px">Εκκίνηση CF-730.4A</div>
<div class="a" style="left:141.4px;top:327.6px;width:14px;height:9px;background:#d4d0c8;border:1px solid #a0a0a0"></div>
<div class="a rt" style="left:152.4px;top:327px;width:100px">Διακοπή CF-730.4A</div>
<div class="a" style="left:270.5px;top:29.4px;width:130px;height:13.6px;background:#9693d8"></div>
<div class="a sh" style="left:270.5px;top:29.4px;width:130px">Εμφύσηση</div>
<div class="a" style="left:400.8px;top:29.4px;width:1.5px;height:318.1px;background:#a8a8a8"></div>
<div class="a" style="left:402.3px;top:29.4px;width:1.2px;height:318.1px;background:#f0eee8"></div>
<div class="a" style="left:274.5px;top:58px;width:14px;height:9px;background:#d4d0c8;border:1px solid #a0a0a0"></div>
<div class="a rt" style="left:285.5px;top:57.4px;width:100px">Εκκίνηση CF-731B</div>
<div class="a" style="left:274.5px;top:96.7px;width:14px;height:9px;background:#ff0000;border:1px solid #e02020"></div>
<div class="a rt" style="left:285.5px;top:96.1px;width:100px">Διακοπή CF-731B</div>
<div class="a" style="left:274.5px;top:135.1px;width:14px;height:9px;background:#d4d0c8;border:1px solid #a0a0a0"></div>
<div class="a rt" style="left:285.5px;top:134.5px;width:100px">Εκκίνηση CF-732B</div>
<div class="a" style="left:274.5px;top:173.8px;width:14px;height:9px;background:#ff0000;border:1px solid #e02020"></div>
<div class="a rt" style="left:285.5px;top:173.2px;width:100px">Διακοπή CF-732B</div>
<div class="a" style="left:274.5px;top:212.1px;width:14px;height:9px;background:#d4d0c8;border:1px solid #a0a0a0"></div>
<div class="a rt" style="left:285.5px;top:211.5px;width:100px">Εκκίνηση CF-733B</div>
<div class="a" style="left:274.5px;top:250.5px;width:14px;height:9px;background:#ff0000;border:1px solid #e02020"></div>
<div class="a rt" style="left:285.5px;top:249.9px;width:100px">Διακοπή CF-733B</div>
<div class="a" style="left:274.5px;top:289.2px;width:14px;height:9px;background:#d4d0c8;border:1px solid #a0a0a0"></div>
<div class="a rt" style="left:285.5px;top:288.6px;width:100px">Εκκίνηση CF-734B</div>
<div class="a" style="left:274.5px;top:327.6px;width:14px;height:9px;background:#ff0000;border:1px solid #e02020"></div>
<div class="a rt" style="left:285.5px;top:327px;width:100px">Διακοπή CF-734B</div>
<div class="a" style="left:403.6px;top:29.4px;width:128.4px;height:13.6px;background:#9693d8"></div>
<div class="a sh" style="left:403.6px;top:29.4px;width:128.4px">Αναρρόφηση</div>
<div class="a" style="left:532.3px;top:14px;width:1.5px;height:333.5px;background:#a8a8a8"></div>
<div class="a" style="left:533.8px;top:14px;width:1.2px;height:333.5px;background:#f0eee8"></div>
<div class="a" style="left:407.6px;top:58px;width:14px;height:9px;background:#00ff00;border:1px solid #20d020"></div>
<div class="a rt" style="left:418.6px;top:57.4px;width:100px">Εκκίνηση CF-730.1B</div>
<div class="a" style="left:407.6px;top:96.7px;width:14px;height:9px;background:#d4d0c8;border:1px solid #a0a0a0"></div>
<div class="a rt" style="left:418.6px;top:96.1px;width:100px">Διακοπή CF-730.1B</div>
<div class="a" style="left:407.6px;top:135.1px;width:14px;height:9px;background:#00ff00;border:1px solid #20d020"></div>
<div class="a rt" style="left:418.6px;top:134.5px;width:100px">Εκκίνηση CF-730.2B</div>
<div class="a" style="left:407.6px;top:173.8px;width:14px;height:9px;background:#d4d0c8;border:1px solid #a0a0a0"></div>
<div class="a rt" style="left:418.6px;top:173.2px;width:100px">Διακοπή CF-730.2B</div>
<div class="a" style="left:407.6px;top:212.1px;width:14px;height:9px;background:#00ff00;border:1px solid #20d020"></div>
<div class="a rt" style="left:418.6px;top:211.5px;width:100px">Εκκίνηση CF-730.3B</div>
<div class="a" style="left:407.6px;top:250.5px;width:14px;height:9px;background:#d4d0c8;border:1px solid #a0a0a0"></div>
<div class="a rt" style="left:418.6px;top:249.9px;width:100px">Διακοπή CF-730.3B</div>
<div class="a" style="left:407.6px;top:289.2px;width:14px;height:9px;background:#00ff00;border:1px solid #20d020"></div>
<div class="a rt" style="left:418.6px;top:288.6px;width:100px">Εκκίνηση CF-730.4B</div>
<div class="a" style="left:407.6px;top:327.6px;width:14px;height:9px;background:#d4d0c8;border:1px solid #a0a0a0"></div>
<div class="a rt" style="left:418.6px;top:327px;width:100px">Διακοπή CF-730.4B</div>
<div class="a" style="left:534.8px;top:29.4px;width:129.5px;height:13.6px;background:#9693d8"></div>
<div class="a sh" style="left:534.8px;top:29.4px;width:129.5px">Εμφύσηση</div>
<div class="a" style="left:664.6px;top:29.4px;width:1.5px;height:318.1px;background:#a8a8a8"></div>
<div class="a" style="left:666.1px;top:29.4px;width:1.2px;height:318.1px;background:#f0eee8"></div>
<div class="a" style="left:538.8px;top:58px;width:14px;height:9px;background:#d4d0c8;border:1px solid #a0a0a0"></div>
<div class="a rt" style="left:549.8px;top:57.4px;width:100px">Εκκίνηση CF-731C</div>
<div class="a" style="left:538.8px;top:96.7px;width:14px;height:9px;background:#ff0000;border:1px solid #e02020"></div>
<div class="a rt" style="left:549.8px;top:96.1px;width:100px">Διακοπή CF-731C</div>
<div class="a" style="left:538.8px;top:135.1px;width:14px;height:9px;background:#d4d0c8;border:1px solid #a0a0a0"></div>
<div class="a rt" style="left:549.8px;top:134.5px;width:100px">Εκκίνηση CF-732C</div>
<div class="a" style="left:538.8px;top:173.8px;width:14px;height:9px;background:#ff0000;border:1px solid #e02020"></div>
<div class="a rt" style="left:549.8px;top:173.2px;width:100px">Διακοπή CF-732C</div>
<div class="a" style="left:538.8px;top:212.1px;width:14px;height:9px;background:#d4d0c8;border:1px solid #a0a0a0"></div>
<div class="a rt" style="left:549.8px;top:211.5px;width:100px">Εκκίνηση CF-733C</div>
<div class="a" style="left:538.8px;top:250.5px;width:14px;height:9px;background:#ff0000;border:1px solid #e02020"></div>
<div class="a rt" style="left:549.8px;top:249.9px;width:100px">Διακοπή CF-733C</div>
<div class="a" style="left:538.8px;top:289.2px;width:14px;height:9px;background:#d4d0c8;border:1px solid #a0a0a0"></div>
<div class="a rt" style="left:549.8px;top:288.6px;width:100px">Εκκίνηση CF-734C</div>
<div class="a" style="left:538.8px;top:327.6px;width:14px;height:9px;background:#ff0000;border:1px solid #e02020"></div>
<div class="a rt" style="left:549.8px;top:327px;width:100px">Διακοπή CF-734C</div>
<div class="a" style="left:667.9px;top:29.4px;width:130.1px;height:13.6px;background:#9693d8"></div>
<div class="a sh" style="left:667.9px;top:29.4px;width:130.1px">Αναρρόφηση</div>
<div class="a" style="left:671.9px;top:58px;width:14px;height:9px;background:#00ff00;border:1px solid #20d020"></div>
<div class="a rt" style="left:682.9px;top:57.4px;width:100px">Εκκίνηση CF-730.1C</div>
<div class="a" style="left:671.9px;top:96.7px;width:14px;height:9px;background:#d4d0c8;border:1px solid #a0a0a0"></div>
<div class="a rt" style="left:682.9px;top:96.1px;width:100px">Διακοπή CF-730.1C</div>
<div class="a" style="left:671.9px;top:135.1px;width:14px;height:9px;background:#00ff00;border:1px solid #20d020"></div>
<div class="a rt" style="left:682.9px;top:134.5px;width:100px">Εκκίνηση CF-730.2C</div>
<div class="a" style="left:671.9px;top:173.8px;width:14px;height:9px;background:#d4d0c8;border:1px solid #a0a0a0"></div>
<div class="a rt" style="left:682.9px;top:173.2px;width:100px">Διακοπή CF-730.2C</div>
<div class="a" style="left:671.9px;top:212.1px;width:14px;height:9px;background:#00ff00;border:1px solid #20d020"></div>
<div class="a rt" style="left:682.9px;top:211.5px;width:100px">Εκκίνηση CF-730.3C</div>
<div class="a" style="left:671.9px;top:250.5px;width:14px;height:9px;background:#d4d0c8;border:1px solid #a0a0a0"></div>
<div class="a rt" style="left:682.9px;top:249.9px;width:100px">Διακοπή CF-730.3C</div>
<div class="a" style="left:671.9px;top:289.2px;width:14px;height:9px;background:#00ff00;border:1px solid #20d020"></div>
<div class="a rt" style="left:682.9px;top:288.6px;width:100px">Εκκίνηση CF-730.4C</div>
<div class="a" style="left:671.9px;top:327.6px;width:14px;height:9px;background:#d4d0c8;border:1px solid #a0a0a0"></div>
<div class="a rt" style="left:682.9px;top:327px;width:100px">Διακοπή CF-730.4C</div>
<div class="a" style="left:3px;top:347.5px;width:795px;height:3.5px;background:#c4c2bc"></div></div></body></html>
